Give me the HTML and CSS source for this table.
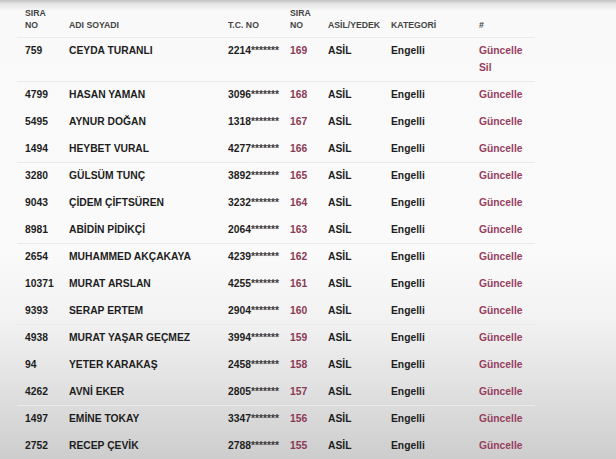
FILE: index.html
```html
<!DOCTYPE html>
<html lang="tr">
<head>
<meta charset="utf-8">
<link rel="stylesheet" href="styles.css">
</head>
<body>
<table class="list">
  <colgroup>
    <col class="c-no"><col class="c-name"><col class="c-tc"><col class="c-sira"><col class="c-asil"><col class="c-kat"><col class="c-act">
  </colgroup>
  <thead>
    <tr><th>SIRA<br>NO</th><th>ADI SOYADI</th><th>T.C. NO</th><th>SIRA<br>NO</th><th>ASİL/YEDEK</th><th>KATEGORİ</th><th>#</th></tr>
  </thead>
  <tbody>
    <tr class="sep"><td>759</td><td>CEYDA TURANLI</td><td>2214<span class="mask">*******</span></td><td class="rank">169</td><td>ASİL</td><td>Engelli</td><td class="act">Güncelle<br>Sil</td></tr>
    <tr><td>4799</td><td>HASAN YAMAN</td><td>3096<span class="mask">*******</span></td><td class="rank">168</td><td>ASİL</td><td>Engelli</td><td class="act">Güncelle</td></tr>
    <tr><td>5495</td><td>AYNUR DOĞAN</td><td>1318<span class="mask">*******</span></td><td class="rank">167</td><td>ASİL</td><td>Engelli</td><td class="act">Güncelle</td></tr>
    <tr class="sep"><td>1494</td><td>HEYBET VURAL</td><td>4277<span class="mask">*******</span></td><td class="rank">166</td><td>ASİL</td><td>Engelli</td><td class="act">Güncelle</td></tr>
    <tr><td>3280</td><td>GÜLSÜM TUNÇ</td><td>3892<span class="mask">*******</span></td><td class="rank">165</td><td>ASİL</td><td>Engelli</td><td class="act">Güncelle</td></tr>
    <tr><td>9043</td><td>ÇİDEM ÇİFTSÜREN</td><td>3232<span class="mask">*******</span></td><td class="rank">164</td><td>ASİL</td><td>Engelli</td><td class="act">Güncelle</td></tr>
    <tr class="sep"><td>8981</td><td>ABİDİN PİDİKÇİ</td><td>2064<span class="mask">*******</span></td><td class="rank">163</td><td>ASİL</td><td>Engelli</td><td class="act">Güncelle</td></tr>
    <tr><td>2654</td><td>MUHAMMED AKÇAKAYA</td><td>4239<span class="mask">*******</span></td><td class="rank">162</td><td>ASİL</td><td>Engelli</td><td class="act">Güncelle</td></tr>
    <tr><td>10371</td><td>MURAT ARSLAN</td><td>4255<span class="mask">*******</span></td><td class="rank">161</td><td>ASİL</td><td>Engelli</td><td class="act">Güncelle</td></tr>
    <tr class="sep"><td>9393</td><td>SERAP ERTEM</td><td>2904<span class="mask">*******</span></td><td class="rank">160</td><td>ASİL</td><td>Engelli</td><td class="act">Güncelle</td></tr>
    <tr><td>4938</td><td>MURAT YAŞAR GEÇMEZ</td><td>3994<span class="mask">*******</span></td><td class="rank">159</td><td>ASİL</td><td>Engelli</td><td class="act">Güncelle</td></tr>
    <tr><td>94</td><td>YETER KARAKAŞ</td><td>2458<span class="mask">*******</span></td><td class="rank">158</td><td>ASİL</td><td>Engelli</td><td class="act">Güncelle</td></tr>
    <tr class="sep"><td>4262</td><td>AVNİ EKER</td><td>2805<span class="mask">*******</span></td><td class="rank">157</td><td>ASİL</td><td>Engelli</td><td class="act">Güncelle</td></tr>
    <tr><td>1497</td><td>EMİNE TOKAY</td><td>3347<span class="mask">*******</span></td><td class="rank">156</td><td>ASİL</td><td>Engelli</td><td class="act">Güncelle</td></tr>
    <tr><td>2752</td><td>RECEP ÇEVİK</td><td>2788<span class="mask">*******</span></td><td class="rank">155</td><td>ASİL</td><td>Engelli</td><td class="act">Güncelle</td></tr>
  </tbody>
</table>
</body>
</html>
```

FILE: styles.css
```css
html, body {
  margin: 0;
  height: 100%;
}
body {
  min-height: 459px;
  overflow: hidden;
  font-family: "Liberation Sans", Arial, sans-serif;
  color: #1d1d1d;
  background: linear-gradient(180deg, #c2c2c2 0px, #e6e6e6 4px, #f9f9f9 11px, #fbfafa 250px, #f2f2f2 320px, #e0e0e0 390px, #cdcdcd 459px);
}
.list {
  margin: 4px 0 0 17px;
  width: 518px;
  border-collapse: collapse;
  table-layout: fixed;
}
.c-no { width: 44px; }
.c-name { width: 159px; }
.c-tc { width: 62px; }
.c-sira { width: 38px; }
.c-asil { width: 63px; }
.c-kat { width: 88px; }
.c-act { width: 64px; }
.list th {
  text-align: left;
  vertical-align: bottom;
  font-size: 8.7px;
  font-weight: bold;
  color: #444;
  line-height: 12px;
  padding: 3px 8px 6px;
  border-bottom: 1px solid #ececec;
  white-space: nowrap;
}
.list td {
  font-size: 10.3px;
  font-weight: bold;
  line-height: 17px;
  padding: 4px 8px 5px;
  vertical-align: top;
  white-space: nowrap;
  border-bottom: 1px solid transparent;
}
.list tr.sep td {
  border-bottom-color: #eaeaea;
}
.mask {
  color: #3a3a3a;
  font-size: 10.3px;
}
.rank {
  color: #8a3a55;
}
.act {
  color: #973e5e;
}
```
